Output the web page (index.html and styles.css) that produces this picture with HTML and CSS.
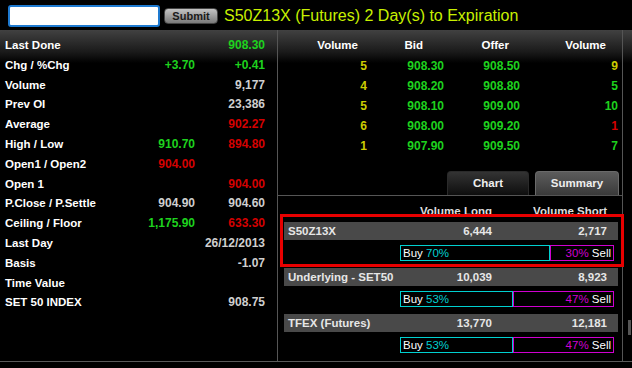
FILE: index.html
```html
<!DOCTYPE html>
<html>
<head>
    <title>S50Z13X</title>
    <link rel="stylesheet" href="styles.css">
</head>
<body>

<div class="topbar">
    <input type="text" class="symbol-input">
    <button class="submit-btn">Submit</button>
    <div class="title">S50Z13X (Futures) 2 Day(s) to Expiration</div>
</div>

<div class="main">
    <div class="quote">
        <div class="qrow"><span class="label">Last Done</span><span></span><span class="green">908.30</span></div>
        <div class="qrow"><span class="label">Chg / %Chg</span><span class="green">+3.70</span><span class="green">+0.41</span></div>
        <div class="qrow"><span class="label">Volume</span><span></span><span class="gray">9,177</span></div>
        <div class="qrow"><span class="label">Prev OI</span><span></span><span class="gray">23,386</span></div>
        <div class="qrow"><span class="label">Average</span><span></span><span class="red">902.27</span></div>
        <div class="qrow"><span class="label">High / Low</span><span class="green">910.70</span><span class="red">894.80</span></div>
        <div class="qrow"><span class="label">Open1 / Open2</span><span class="red">904.00</span><span></span></div>
        <div class="qrow"><span class="label">Open 1</span><span></span><span class="red">904.00</span></div>
        <div class="qrow"><span class="label">P.Close / P.Settle</span><span class="gray">904.90</span><span class="gray">904.60</span></div>
        <div class="qrow"><span class="label">Ceiling / Floor</span><span class="green">1,175.90</span><span class="red">633.30</span></div>
        <div class="qrow"><span class="label">Last Day</span><span></span><span class="gray">26/12/2013</span></div>
        <div class="qrow"><span class="label">Basis</span><span></span><span class="gray">-1.07</span></div>
        <div class="qrow"><span class="label">Time Value</span><span></span><span></span></div>
        <div class="qrow"><span class="label">SET 50 INDEX</span><span></span><span class="gray">908.75</span></div>
    </div>

    <div class="side">
        <div class="book">
            <div class="book-row book-head">
                <span class="h1">Volume</span><span class="h2">Bid</span><span class="h3">Offer</span><span class="h4">Volume</span>
            </div>
            <div class="book-row"><span class="yellow">5</span><span class="green">908.30</span><span class="green">908.50</span><span class="yellow">9</span></div>
            <div class="book-row"><span class="yellow">4</span><span class="green">908.20</span><span class="green">908.80</span><span class="green">5</span></div>
            <div class="book-row"><span class="yellow">5</span><span class="green">908.10</span><span class="green">909.00</span><span class="green">10</span></div>
            <div class="book-row"><span class="yellow">6</span><span class="green">908.00</span><span class="green">909.20</span><span class="red">1</span></div>
            <div class="book-row"><span class="yellow">1</span><span class="green">907.90</span><span class="green">909.50</span><span class="green">7</span></div>
        </div>

        <div class="tabs">
            <div class="tab">Chart</div>
            <div class="tab active">Summary</div>
        </div>

        <div class="summary">
            <div class="sum-grid sum-head"><span></span><span>Volume Long</span><span>Volume Short</span></div>

            <div class="sum-item">
                <div class="sum-grid sum-row"><span>S50Z13X</span><span>6,444</span><span>2,717</span></div>
                <div class="ratio">
                    <div class="buy" style="width: 70%">Buy <span class="cyan">70%</span></div>
                    <div class="sell"><span class="magenta">30%</span> Sell</div>
                </div>
            </div>

            <div class="sum-item">
                <div class="sum-grid sum-row"><span>Underlying - SET50</span><span>10,039</span><span>8,923</span></div>
                <div class="ratio">
                    <div class="buy" style="width: 53%">Buy <span class="cyan">53%</span></div>
                    <div class="sell"><span class="magenta">47%</span> Sell</div>
                </div>
            </div>

            <div class="sum-item">
                <div class="sum-grid sum-row"><span>TFEX (Futures)</span><span>13,770</span><span>12,181</span></div>
                <div class="ratio">
                    <div class="buy" style="width: 53%">Buy <span class="cyan">53%</span></div>
                    <div class="sell"><span class="magenta">47%</span> Sell</div>
                </div>
            </div>

            <div class="highlight"></div>
        </div>
    </div>

    <div class="scroll"><div class="thumb"></div></div>
</div>

</body>
</html>
```

FILE: styles.css
```css
body {
    margin: 0;
    padding: 0;
    background-color: #000;
    font-family: 'Liberation Sans', Arial, sans-serif;
    color: #fff;
    width: 632px;
    height: 368px;
    overflow: hidden;
}

/* top bar */
.topbar {
    height: 30px;
    display: flex;
    align-items: center;
}

.symbol-input {
    box-sizing: border-box;
    width: 152px;
    height: 22px;
    margin: 1px 0 0 8px;
    border: 2px solid #1e7ad0;
    border-radius: 3px;
    background-color: #fff;
    padding: 0 3px;
}

.submit-btn {
    box-sizing: border-box;
    width: 54px;
    height: 16px;
    margin: 1px 0 0 4px;
    padding: 0;
    border: 1px solid #444;
    border-radius: 4px;
    background: linear-gradient(#c4c4c4, #7a7a7a);
    color: #1a1a1a;
    font-family: 'Liberation Sans', Arial, sans-serif;
    font-size: 11px;
    font-weight: bold;
}

.title {
    margin-left: 6px;
    margin-top: 2px;
    color: #c8f000;
    font-size: 16px;
}

/* main area */
.main {
    display: flex;
    height: 331px;
    border-bottom: 1px solid #5a5a5a;
    background: linear-gradient(#414141 0, #1a1a1a 22px, #000 33px);
}

.quote {
    width: 277px;
    border-right: 1px solid #555;
    padding-top: 5px;
}

.qrow {
    display: grid;
    grid-template-columns: 1fr 70px 70px;
    height: 19.8px;
    line-height: 20px;
    padding: 0 12px 0 5px;
    font-size: 12px;
    font-weight: bold;
    text-align: right;
}

.label {
    text-align: left;
    font-size: 11.5px;
    color: #fff;
}

.green { color: #1ed21e; }
.red { color: #d40000; }
.gray { color: #cfcfcf; }
.yellow { color: #cccc00; }
.cyan { color: #00d0d0; }
.magenta { color: #d000d0; }

/* order book */
.side {
    width: 344px;
    border-right: 1px solid #555;
}

.book {
    padding-top: 5px;
}

.book-row {
    display: grid;
    grid-template-columns: 89px 77px 76px 1fr;
    height: 20px;
    line-height: 20px;
    padding-right: 4px;
    font-size: 12px;
    font-weight: bold;
    text-align: right;
}

.book-head {
    margin-bottom: 1px;
    font-size: 11.5px;
    color: #fff;
}

.h1 { padding-right: 9px; }
.h2 { padding-right: 21px; }
.h3 { padding-right: 11px; }
.h4 { padding-right: 12px; }

/* tabs */
.tabs {
    display: flex;
    justify-content: flex-end;
    gap: 6px;
    margin-top: 15px;
    padding-right: 3px;
    border-bottom: 1px solid #555;
}

.tab {
    box-sizing: border-box;
    width: 82px;
    height: 24px;
    line-height: 23px;
    text-align: center;
    font-size: 11.5px;
    font-weight: bold;
    color: #eee;
    border: 1px solid #2a2a2a;
    border-bottom: none;
    border-radius: 4px 4px 0 0;
    background: linear-gradient(#333, #0e0e0e);
}

.tab.active {
    width: 84px;
    border-color: #6a6a6a;
    background: linear-gradient(#5c5c5c, #3a3a3a);
}

/* summary */
.summary {
    position: relative;
    padding: 8px 4px 0 6px;
}

.sum-grid {
    display: grid;
    grid-template-columns: minmax(0, 1fr) 100px 115px;
    padding: 0 11px 0 4px;
    text-align: right;
    font-size: 11.5px;
    font-weight: bold;
    white-space: nowrap;
}

.sum-grid span:first-child {
    text-align: left;
}

.sum-head {
    height: 14px;
    line-height: 14px;
    color: #ddd;
}

.sum-item {
    margin-top: 4px;
    margin-bottom: 7px;
}

.sum-row {
    height: 18px;
    line-height: 18px;
    background-color: #494949;
    color: #e6e6e6;
}

.ratio {
    display: flex;
    height: 16px;
    margin: 5px 4px 0 116px;
    font-size: 11.5px;
    line-height: 14px;
}

.buy {
    box-sizing: border-box;
    border: 1px solid #00d0d0;
    padding-left: 2px;
}

.sell {
    flex: 1;
    border: 1px solid #d000d0;
    padding-right: 2px;
    text-align: right;
}

.highlight {
    position: absolute;
    top: 18px;
    left: 2px;
    width: 344px;
    height: 53px;
    box-sizing: border-box;
    border: 3px solid #e80000;
}

/* scroll column */
.scroll {
    flex: 1;
}

.thumb {
    width: 3px;
    height: 15px;
    margin: 290px 0 0 5px;
    background-color: #555;
}
```
